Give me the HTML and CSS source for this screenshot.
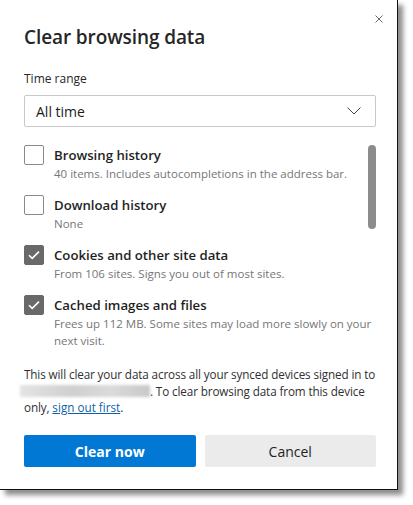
FILE: index.html
```html
<!DOCTYPE html>
<html>
<head>
<meta charset="utf-8">
<link rel="stylesheet" href="styles.css">
</head>
<body>
<div class="dialog">
  <button class="close" aria-label="Close">
    <svg width="8" height="8" viewBox="0 0 8 8"><path d="M0.5 0.5L7.5 7.5M7.5 0.5L0.5 7.5" stroke="#6b6b6b" stroke-width="1"/></svg>
  </button>
  <h1 class="title">Clear browsing data</h1>
  <div class="field-label">Time range</div>
  <div class="select">
    <span>All time</span>
    <svg class="chev" width="14" height="8" viewBox="0 0 14 8"><path d="M0.5 0.5L7 7L13.5 0.5" fill="none" stroke="#444" stroke-width="1"/></svg>
  </div>
  <div class="scroll-area">
    <div class="list">
      <div class="item">
        <span class="box"></span>
        <div class="texts">
          <div class="label">Browsing history</div>
          <div class="desc">40 items. Includes autocompletions in the address bar.</div>
        </div>
      </div>
      <div class="item">
        <span class="box"></span>
        <div class="texts">
          <div class="label">Download history</div>
          <div class="desc">None</div>
        </div>
      </div>
      <div class="item">
        <span class="box checked"><svg width="12" height="10" viewBox="0 0 12 10"><path d="M1 5.2L4.2 8.4L11 1.6" fill="none" stroke="#fff" stroke-width="1.6"/></svg></span>
        <div class="texts">
          <div class="label">Cookies and other site data</div>
          <div class="desc">From 106 sites. Signs you out of most sites.</div>
        </div>
      </div>
      <div class="item">
        <span class="box checked"><svg width="12" height="10" viewBox="0 0 12 10"><path d="M1 5.2L4.2 8.4L11 1.6" fill="none" stroke="#fff" stroke-width="1.6"/></svg></span>
        <div class="texts">
          <div class="label">Cached images and files</div>
          <div class="desc">Frees up 112 MB. Some sites may load more slowly on your next visit.</div>
        </div>
      </div>
    </div>
    <div class="scrollbar"></div>
  </div>
  <p class="note">This will clear your data across all your synced devices signed in to <span class="blur"></span>. To clear browsing data from this device only, <a href="#" class="link">sign out first</a>.</p>
  <div class="actions">
    <button class="btn primary">Clear now</button>
    <button class="btn secondary">Cancel</button>
  </div>
</div>
</body>
</html>
```
FILE: styles.css
```css
* { box-sizing: border-box; }
html, body { margin: 0; padding: 0; background: #fff; }
body {
  font-family: "Open Sans", "Noto Sans", sans-serif;
  color: #1b1b1b;
  width: 413px;
  height: 505px;
  overflow: hidden;
}
.dialog {
  position: relative;
  width: 398px;
  height: 490px;
  background: #fff;
  border-right: 1px solid #111;
  border-bottom: 1px solid #111;
  box-shadow: 5px 5px 5px rgba(0,0,0,0.45);
  padding: 22px 21px 22px 24px;
  display: flex;
  flex-direction: column;
}
.close {
  position: absolute;
  top: 14px;
  right: 13px;
  width: 10px;
  height: 10px;
  padding: 0;
  border: 0;
  background: none;
  display: flex;
  align-items: center;
  justify-content: center;
}
.title {
  margin: 0;
  font-size: 19px;
  line-height: 30px;
  font-weight: 600;
  color: #262626;
  letter-spacing: -0.1px;
}
.field-label {
  margin-top: 19px;
  font-size: 12px;
  line-height: 16px;
  color: #262626;
}
.select {
  margin-top: 8px;
  height: 32px;
  border: 1px solid #c8c8c8;
  border-radius: 2px;
  padding: 0 14px 0 11px;
  display: flex;
  align-items: center;
  justify-content: space-between;
  font-size: 14px;
  color: #1b1b1b;
}
.scroll-area {
  position: relative;
  margin-top: 18px;
}
.list {
  display: flex;
  flex-direction: column;
  gap: 13px;
}
.item {
  display: flex;
  gap: 10px;
}
.box {
  flex: none;
  width: 20px;
  height: 20px;
  border: 1px solid #8a8a8a;
  border-radius: 2px;
  display: flex;
  align-items: center;
  justify-content: center;
}
.box.checked {
  background: #696969;
  border-color: #696969;
}
.texts { flex: 1; }
.label {
  font-size: 13.2px;
  line-height: 20px;
  font-weight: 600;
  color: #1f1f1f;
}
.desc {
  font-size: 11.5px;
  line-height: 17px;
  color: #767676;
}
.scrollbar {
  position: absolute;
  top: 0;
  right: 0;
  width: 8px;
  height: 84px;
  border-radius: 4px;
  background: #8c8c8c;
}
.note {
  margin: 17px 0 0;
  font-size: 11.7px;
  line-height: 16.5px;
  letter-spacing: -0.12px;
  color: #303030;
}
.blur {
  display: inline-block;
  width: 130px;
  height: 12px;
  margin-left: -4px;
  vertical-align: -1px;
  background: linear-gradient(90deg, #e4e4e4, #cfcfcf 40%, #dadada 70%, #c8c8c8);
  filter: blur(1.5px);
}
.link {
  color: #0f5fa8;
  text-decoration: underline;
  letter-spacing: 0;
}
.actions {
  margin-top: auto;
  display: flex;
  gap: 9px;
}
.btn {
  flex: 1;
  height: 32px;
  border: 0;
  border-radius: 2px;
  font-family: inherit;
  font-size: 14px;
}
.primary {
  background: #0078d4;
  color: #fff;
  font-weight: 700;
}
.secondary {
  background: #ebebeb;
  color: #1f1f1f;
}
```
